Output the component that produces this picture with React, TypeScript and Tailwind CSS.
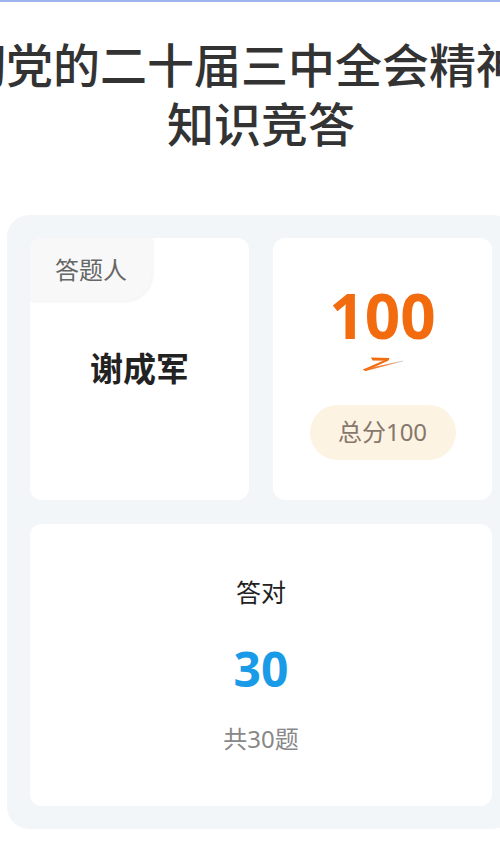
const cjk = { fontFamily: '"Noto Sans", "Noto Sans CJK SC", sans-serif' };

function Squiggle() {
  return (
    <svg width="44" height="18" viewBox="0 0 44 18" fill="none">
      <defs>
        <linearGradient id="tail" x1="0" y1="0" x2="1" y2="0">
          <stop offset="0" stopColor="#f26b0f" />
          <stop offset="0.6" stopColor="#f08a4a" />
          <stop offset="1" stopColor="#b9b4b0" stopOpacity="0.6" />
        </linearGradient>
      </defs>
      <path d="M10 2.6 L28.5 3 L27 5.8 L11.5 5.6 Z" fill="#f26b0f" />
      <path d="M28.5 3 L2 14.4 L4.5 16 L27 5.8 Z" fill="#f26b0f" />
      <path d="M2 14.4 L42 5.4 L42.5 6.2 L4.5 16 Z" fill="url(#tail)" />
    </svg>
  );
}

export default function App() {
  return (
    <div className="w-[500px] min-h-[845px] overflow-hidden bg-white" style={cjk}>
      <div className="h-[2px] bg-[#9db5ec]" />
      <div className="w-[522px]">
        {/* title */}
        <div className="pt-[34px] text-[47px] leading-[59px] font-medium text-[#333]">
          <div className="whitespace-nowrap ml-[-182px]">学习贯彻党的二十届三中全会精神</div>
          <div className="text-center">知识竞答</div>
        </div>

        {/* result panel */}
        <div className="mt-[61px] ml-[7px] w-[508px] rounded-[22px] bg-[#f3f6f9] p-[23px]">
          <div className="grid grid-cols-2 gap-[24px]">
            {/* answerer */}
            <div className="relative h-[262px] rounded-[12px] bg-white flex items-center justify-center">
              <div className="absolute top-0 left-0 w-[122px] h-[63px] rounded-tl-[12px] rounded-br-[28px] bg-[#f8f8f9] shadow-[1px_1px_3px_rgba(0,0,0,0.06)] flex items-center justify-center text-[24px] text-[#666]">
                答题人
              </div>
              <div className="text-[33px] font-bold text-[#222]">谢成军</div>
            </div>

            {/* score */}
            <div className="h-[262px] rounded-[12px] bg-white flex flex-col items-center justify-center">
              <div className="text-[62px] leading-[72px] font-bold text-[#f26b0f]">100</div>
              <div className="mt-[4px]">
                <Squiggle />
              </div>
              <div className="mt-[32px] h-[55px] w-[146px] rounded-full bg-[#fdf3e3] flex items-center justify-center text-[24px] text-[#85776b]">
                总分100
              </div>
            </div>
          </div>

          {/* correct count */}
          <div className="mt-[24px] h-[282px] rounded-[12px] bg-white flex flex-col items-center justify-center">
            <div className="text-[25px] leading-[34px] text-[#222]">答对</div>
            <div className="mt-[32px] text-[48px] leading-[56px] font-bold text-[#1a9be8]">30</div>
            <div className="mt-[25px] text-[24px] leading-[34px] text-[#888]">共30题</div>
          </div>
        </div>
      </div>
    </div>
  );
}
